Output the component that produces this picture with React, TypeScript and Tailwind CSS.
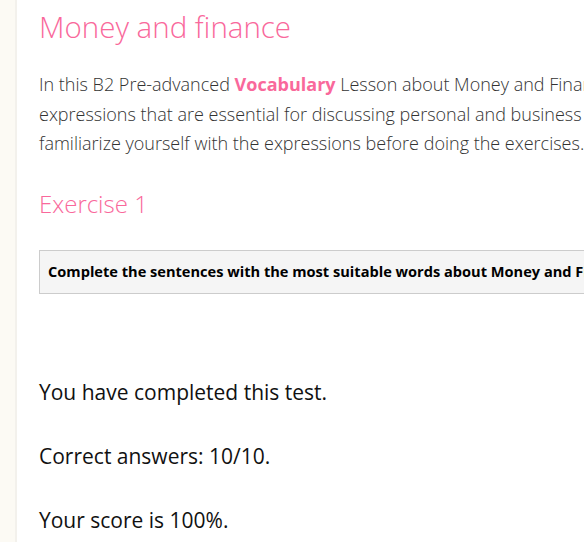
import React from "react";

const App = () => {
  return (
    <div className="flex min-h-[542px] w-[584px] overflow-hidden bg-white font-['Open_Sans',sans-serif]">
      {/* Side strip */}
      <div className="w-[17px] shrink-0 bg-[#fcfaf4] border-r-2 border-[#f3f1ec]" />

      {/* Content */}
      <div className="pl-[22px] pt-[7px] w-[900px] shrink-0">
        <h1 className="text-[29.5px] font-light leading-[40px] text-[#f9689b]">Money and finance</h1>

        <div className="mt-[23px] text-[18px] font-light leading-[29.5px] text-[#333] whitespace-nowrap">
          <p>
            In this B2 Pre-advanced <span className="font-bold text-[#f9689b]">Vocabulary</span> Lesson about Money and Finance, you will learn useful words and
          </p>
          <p>expressions that are essential for discussing personal and business finances. Please</p>
          <p>familiarize yourself with the expressions before doing the exercises.</p>
        </div>

        <h2 className="mt-[29px] text-[24px] font-light leading-[32px] text-[#f9689b]">Exercise 1</h2>

        <div className="mt-[30px] h-[44px] flex items-center border border-[#cccccc] bg-[#f5f5f5] pl-[8px] whitespace-nowrap">
          <span className="text-[14.6px] font-bold text-black">
            Complete the sentences with the most suitable words about Money and Finance.
          </span>
        </div>

        <div className="mt-[84px] text-[21px] text-[#111] flex flex-col gap-[36px] leading-[28px]">
          <p>You have completed this test.</p>
          <p>Correct answers: 10/10.</p>
          <p>Your score is 100%.</p>
        </div>
      </div>
    </div>
  );
};

export default App;
